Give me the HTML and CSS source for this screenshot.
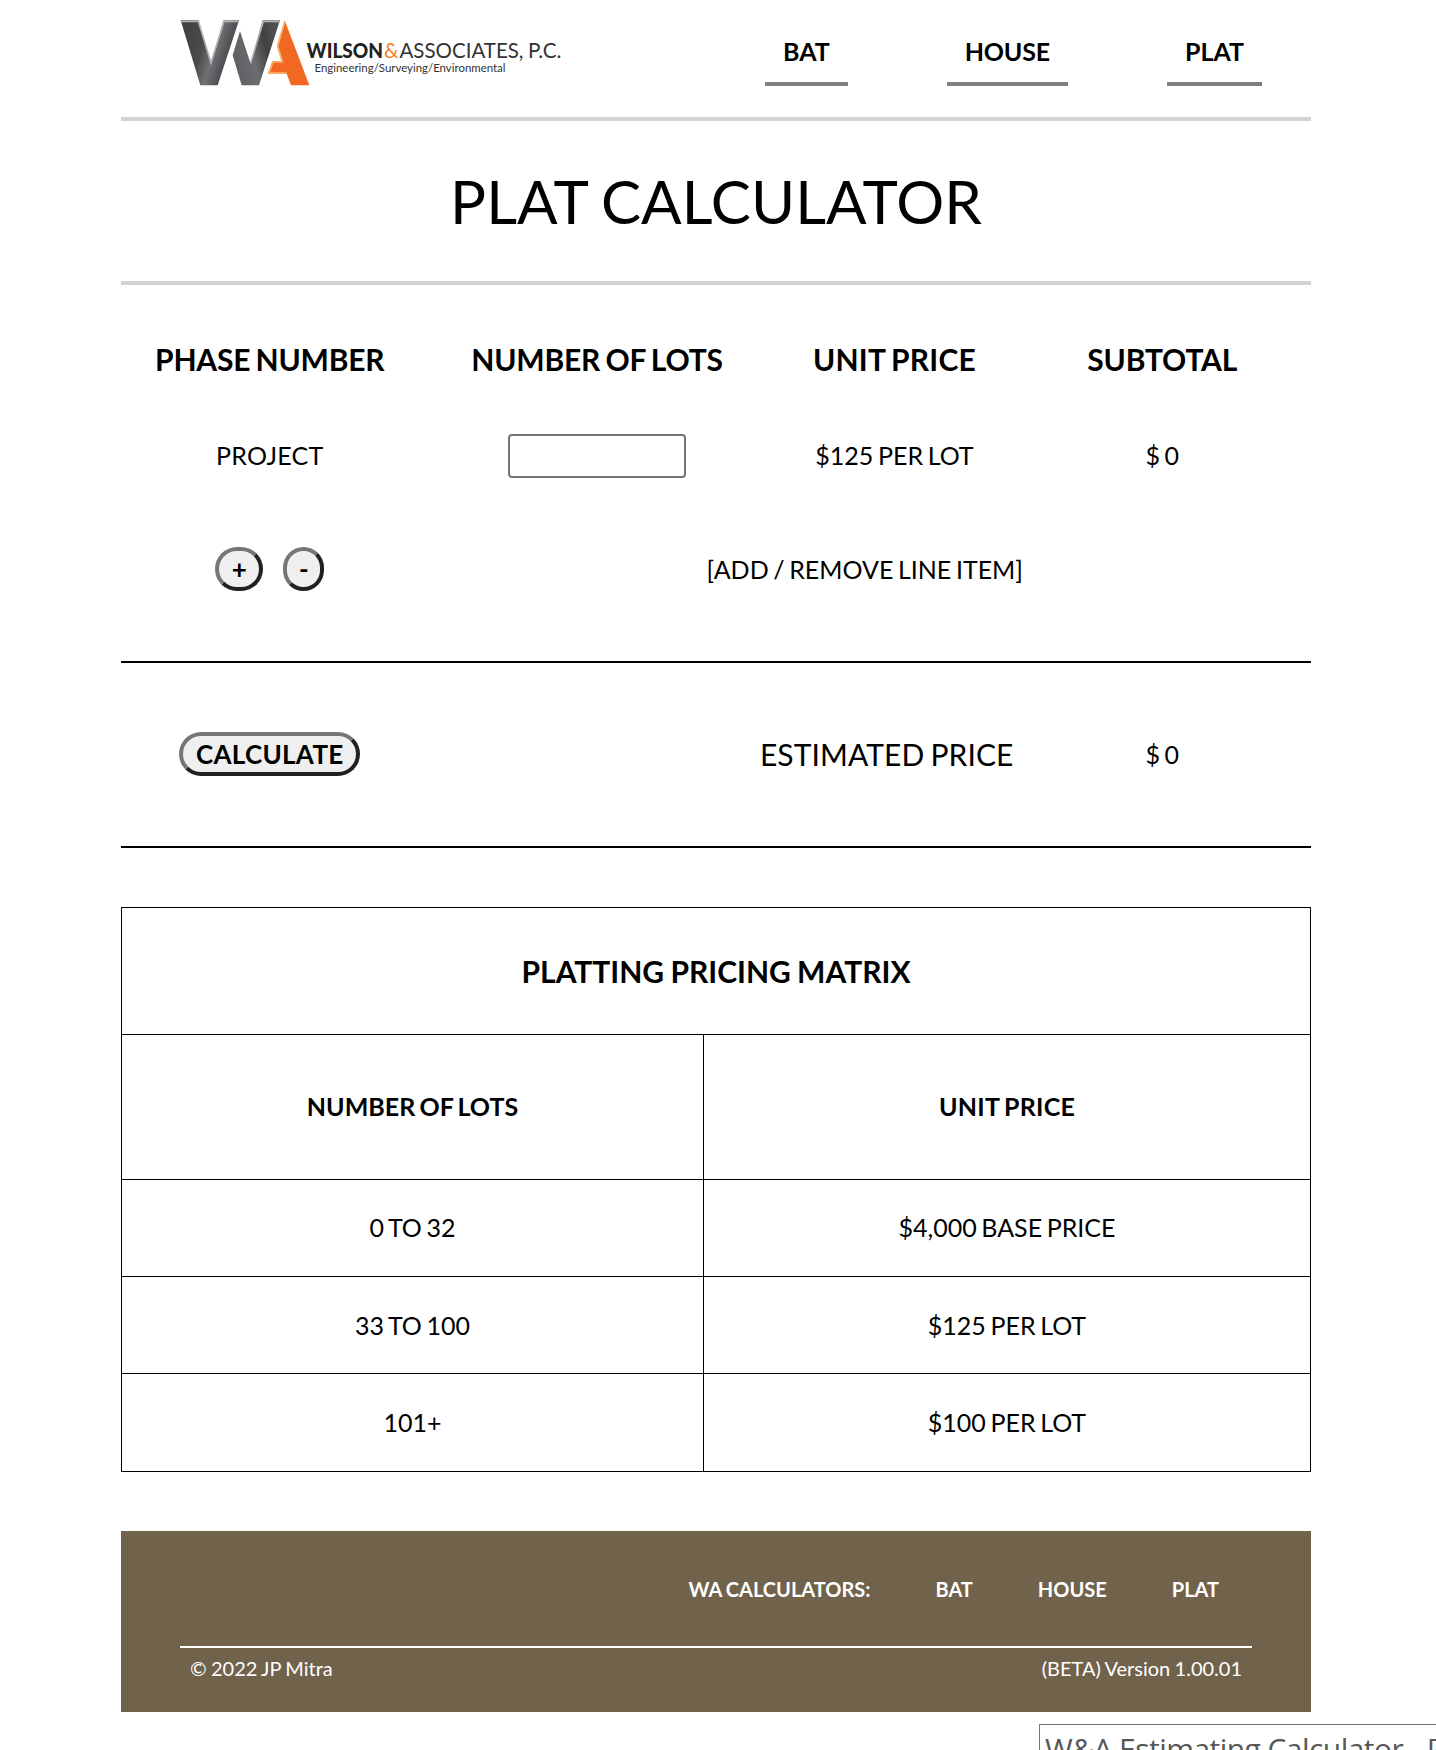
FILE: index.html
```html
<!DOCTYPE html>
<html lang="en">
<head>
<meta charset="utf-8">
<title>W&amp;A Estimating Calculator - Plat</title>
<link rel="stylesheet" href="styles.css">
</head>
<body>
<div class="page">
  <header class="header">
    <svg class="logo" width="382" height="66" viewBox="0 0 382 66">
      <defs>
        <linearGradient id="steelA" x1="0" y1="0" x2="1" y2="0.35">
          <stop offset="0.1" stop-color="#414143"/><stop offset="0.45" stop-color="#4a4a4c"/><stop offset="0.66" stop-color="#707175"/><stop offset="0.95" stop-color="#434345"/>
        </linearGradient>
        <linearGradient id="steelB" x1="0" y1="0.5" x2="1" y2="0.1">
          <stop offset="0" stop-color="#606164"/><stop offset="0.35" stop-color="#6b6c70"/><stop offset="0.65" stop-color="#414143"/><stop offset="1" stop-color="#58585a"/>
        </linearGradient>
      </defs>
      <g transform="translate(0 .3) scale(.33333)">
        <path fill="url(#steelA)" d="M2 0H56L93 130L130 0H177L113 195H61Z"/>
        <path fill="url(#steelB)" d="M158 105L180 32L212 130L248 0H300L237 195H185Z"/>
        <path fill="none" stroke="#b4b4b6" stroke-width="5" d="M4 3H55L93 128L132 3H174M212 128L250 3H297"/>
        <path fill="#f26722" d="M314 0L388 195H333L320 160H264L277 123H305L291 77Z"/>
        <path fill="none" stroke="#fbb36b" stroke-width="5" d="M314 4L293 77L307 125H279L267 158H320"/>
      </g>
      <text class="logo-bold" x="126.5" y="37.5" textLength="76.5" lengthAdjust="spacingAndGlyphs">WILSON</text>
      <text class="logo-amp" x="204" y="37.5" textLength="14.5" lengthAdjust="spacingAndGlyphs">&amp;</text>
      <text class="logo-thin" x="219.5" y="37.5" textLength="124" lengthAdjust="spacingAndGlyphs">ASSOCIATES,</text>
      <text class="logo-thin" x="348" y="37.5" textLength="33.5" lengthAdjust="spacingAndGlyphs">P.C.</text>
      <text class="logo-tag" x="134.5" y="52" textLength="191" lengthAdjust="spacingAndGlyphs">Engineering/Surveying/Environmental</text>
    </svg>
    <nav class="nav">
      <a class="nav-link">BAT</a>
      <a class="nav-link nav-house">HOUSE</a>
      <a class="nav-link">PLAT</a>
    </nav>
  </header>

  <h1 class="title">PLAT CALCULATOR</h1>

  <main>
    <section class="calc">
      <div class="row row-head"><span class="tight">PHASE NUMBER</span><span class="tight">NUMBER OF LOTS</span><span class="loose">UNIT PRICE</span><span class="tight">SUBTOTAL</span></div>
      <div class="row row-item"><span class="loose">PROJECT</span><span><input class="lots" type="text" aria-label="Number of lots"></span><span>$125 PER LOT</span><span>$ 0</span></div>
      <div class="row row-edit">
        <span class="edit-buttons"><button class="btn btn-add">+</button><button class="btn btn-remove">-</button></span>
        <span class="edit-note">[ADD / REMOVE LINE ITEM]</span>
      </div>
    </section>
    <section class="row total">
      <span><button class="btn btn-calc">CALCULATE</button></span>
      <span class="total-label">ESTIMATED PRICE</span>
      <span>$ 0</span>
    </section>

    <table class="matrix">
      <colgroup><col class="col-lots"><col></colgroup>
      <tr class="matrix-title"><th colspan="2">PLATTING PRICING MATRIX</th></tr>
      <tr class="matrix-head"><th>NUMBER OF LOTS</th><th class="loose">UNIT PRICE</th></tr>
      <tr class="matrix-first"><td>0 TO 32</td><td>$4,000 BASE PRICE</td></tr>
      <tr><td>33 TO 100</td><td>$125 PER LOT</td></tr>
      <tr class="matrix-last"><td>101+</td><td>$100 PER LOT</td></tr>
    </table>
  </main>

  <footer class="footer">
    <div class="footer-links"><span>WA CALCULATORS:</span><a>BAT</a><a>HOUSE</a><a>PLAT</a></div>
    <div class="footer-base"><span>© 2022 JP Mitra</span><span>(BETA) Version 1.00.01</span></div>
  </footer>
</div>
<div class="tooltip">W&amp;A Estimating Calculator - Plat</div>
</body>
</html>
```
FILE: styles.css
```css
* { box-sizing: border-box; }
html, body { height: 1750px; }
body {
  margin: 0;
  overflow: hidden;
  position: relative;
  background: #fff;
  color: #000;
  font: 25px/30px Lato, sans-serif;
  word-spacing: -1.8px;
}
.page { width: 1190px; margin-left: 121px; }

.header {
  display: flex;
  justify-content: space-between;
  height: 121px;
  padding: 20px 49px 0 59px;
  border-bottom: 4px solid lightgray;
}
.logo { display: block; overflow: visible; }
.logo text { font-family: Lato, sans-serif; }
.logo .logo-bold { font-size: 21.5px; font-weight: 900; fill: #222; }
.logo .logo-amp { font-size: 21.5px; fill: #f58220; }
.logo .logo-thin { font-size: 21.5px; fill: #333; }
.logo .logo-tag { font-size: 11px; fill: #333; }
.nav { display: flex; gap: 99px; font-weight: 700; }
.nav-link {
  height: 66px;
  padding: 16px 18px 0;
  border-bottom: 4px solid gray;
}
.nav-house { letter-spacing: -.2px; }
.tight { letter-spacing: -.2px; }
.loose { letter-spacing: .25px; }

.title {
  margin: 0;
  height: 164px;
  padding-top: 44px;
  border-bottom: 4px solid lightgray;
  font-size: 60px;
  line-height: 72px;
  font-weight: 400;
  letter-spacing: .1px;
  text-align: center;
}

.calc { height: 378px; padding-top: 44px; border-bottom: 2px solid #000; }
.row {
  display: grid;
  grid-template-columns: 25% 30% 20% 25%;
  align-items: center;
  text-align: center;
}
.row-head { height: 60px; font-size: 30px; line-height: 36px; font-weight: 700; }
.row-item { height: 132px; }
.row-edit { height: 96px; }
.lots {
  display: block;
  width: 178px;
  height: 44px;
  margin: 2px auto 0;
  border: 2px solid #767676;
  border-radius: 4px;
  font: inherit;
}
.edit-buttons { display: flex; justify-content: center; gap: 20px; }
.edit-note { grid-column: 2 / 5; }
.btn {
  height: 44px;
  padding: 0;
  border: 4px solid;
  border-color: #767676 #212121 #212121 #767676;
  border-radius: 25px;
  background: #efefef;
  color: #000;
  font: 700 26px/32px Lato, sans-serif;
}
.btn-add { width: 48px; }
.btn-remove { width: 41px; }
.btn-calc { width: 181px; display: block; margin: 0 auto; letter-spacing: .3px; }
.total { height: 185px; padding-bottom: 2px; border-bottom: 2px solid #000; }
.total-label { grid-column: 2 / 4; text-align: right; font-size: 30px; letter-spacing: .1px; }

.matrix {
  width: 1190px;
  margin-top: 59px;
  border-collapse: collapse;
  table-layout: fixed;
  text-align: center;
}
.col-lots { width: 582px; }
.matrix th, .matrix td { padding: 0; border: 1px solid #000; }
.matrix tr { height: 97px; }
.matrix .matrix-title { height: 127px; font-size: 30px; word-spacing: -1px; }
.matrix .matrix-head { height: 145px; }
.matrix .matrix-last { height: 98px; }
.matrix .matrix-head th, .matrix .matrix-first td, .matrix .matrix-last td { padding-bottom: 2px; }

.footer {
  height: 181px;
  margin-top: 59px;
  padding: 0 59px;
  background: #71624b;
  color: #fff;
  font-size: 20px;
  word-spacing: -.8px;
}
.footer-links {
  display: flex;
  justify-content: flex-end;
  gap: 65px;
  height: 117px;
  padding: 43px 33px 0 0;
  border-bottom: 2px solid #fff;
  font-weight: 700;
}
.footer-base { display: flex; justify-content: space-between; padding: 5px 10px; }

.tooltip {
  position: absolute;
  left: 1039px;
  top: 1724px;
  width: 420px;
  height: 50px;
  padding: 4px 5px;
  border: 1px solid #767676;
  background: #fff;
  color: #575757;
  font: 30px/40px "Open Sans", sans-serif;
  letter-spacing: -.55px;
  word-spacing: 0;
  white-space: nowrap;
}
```
